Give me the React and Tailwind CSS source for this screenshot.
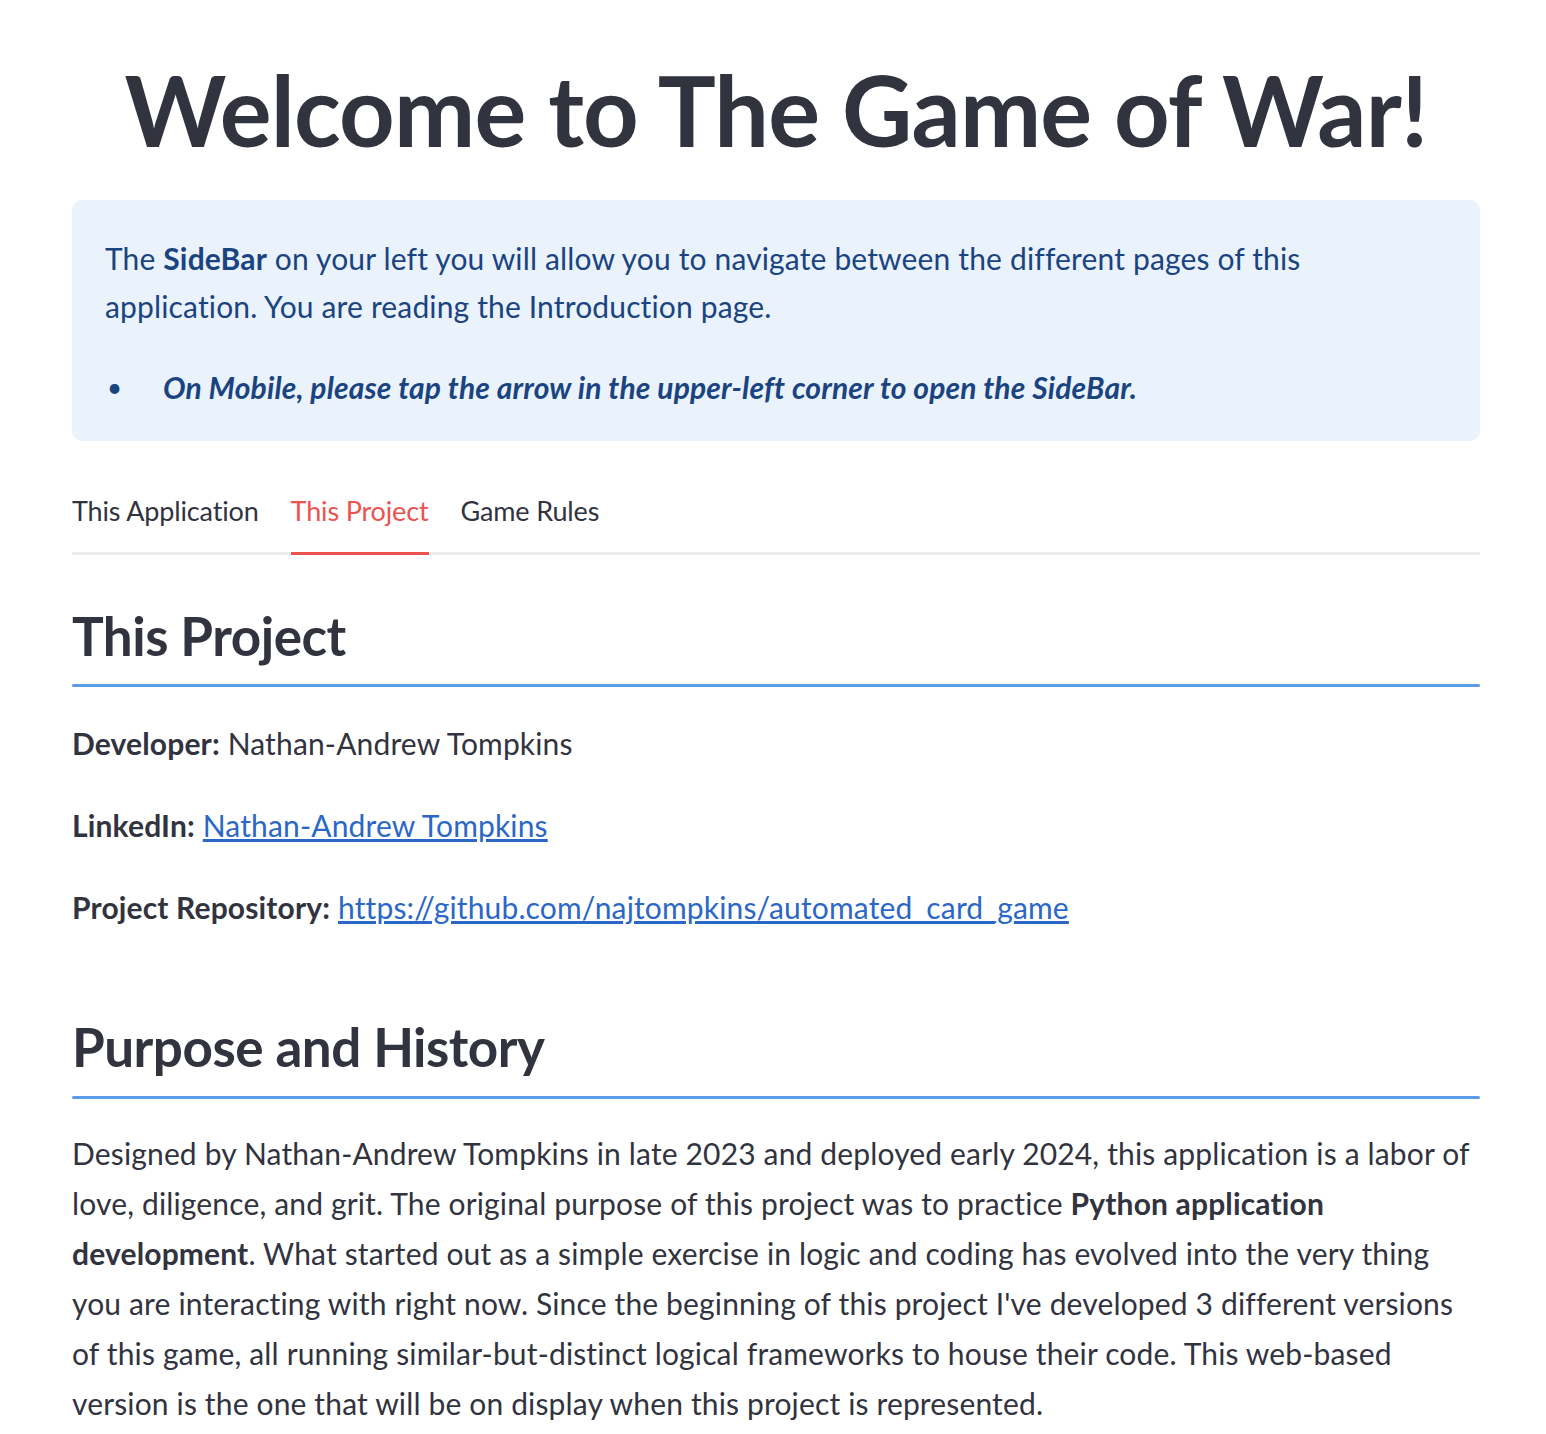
import { useState } from "react";

const tabs = ["This Application", "This Project", "Game Rules"];

function Heading({ children, top }) {
   return (
      <div className={top}>
         <h2 className="text-[53px] font-bold leading-[1.2] text-[#31333f] tracking-[-0.5px]">
            {children}
         </h2>
         <div className="mt-[17px] h-[3px] rounded-full bg-[#5b9be8]"></div>
      </div>
   );
}

function App() {
   const [active, setActive] = useState(1);

   return (
      <div
         className="h-screen overflow-hidden bg-white text-[#31333f]"
         style={{ fontFamily: "Lato, 'Noto Sans', sans-serif" }}
      >
         <div className="ml-[72px] w-[1408px]">
            <h1 className="pt-[52px] text-center text-[97px] font-bold leading-[116px] tracking-[-0.8px] text-[#31333f]">
               Welcome to The Game of War!
            </h1>

            <div className="mt-[32px] rounded-[10px] bg-[#eaf2fc] pl-[33px] pr-[60px] pt-[34px] pb-[30px] text-[30px] leading-[48px] tracking-[0.15px] text-[#1a4480]">
               <p>
                  The <strong>SideBar</strong> on your left you will allow you
                  to navigate between the different pages of this application.
                  You are reading the Introduction page.
               </p>
               <ul className="mt-[33px] pl-[2px]">
                  <li className="flex items-center">
                     <span className="w-[56px] text-[26px]">•</span>
                     <em className="font-bold">
                        On Mobile, please tap the arrow in the upper-left corner
                        to open the SideBar.
                     </em>
                  </li>
               </ul>
            </div>

            <div className="mt-[50px] flex gap-[32px] border-b-[3px] border-[#ebebeb] text-[27px] tracking-[-0.15px]">
               {tabs.map((tab, index) => (
                  <button
                     key={tab}
                     onClick={() => setActive(index)}
                     className={
                        index === active
                           ? "-mb-[3px] border-b-[3px] border-[#ec5350] pb-[20px] text-[#ec5350]"
                           : "-mb-[3px] border-b-[3px] border-transparent pb-[20px]"
                     }
                  >
                     {tab}
                  </button>
               ))}
            </div>

            <Heading top="mt-[49px]">This Project</Heading>

            <div className="mt-[31px] space-y-[32px] text-[30px] leading-[50px] tracking-[0.15px]">
               <p>
                  <strong>Developer:</strong> Nathan-Andrew Tompkins
               </p>
               <p>
                  <strong>LinkedIn:</strong>{" "}
                  <a href="#" className="text-[#2b67c6] underline">
                     Nathan-Andrew Tompkins
                  </a>
               </p>
               <p>
                  <strong>Project Repository:</strong>{" "}
                  <a href="#" className="text-[#2b67c6] underline">
                     https://github.com/najtompkins/automated_card_game
                  </a>
               </p>
            </div>

            <Heading top="mt-[83px]">Purpose and History</Heading>

            <p className="mt-[29px] text-[30px] leading-[50px] tracking-[0.15px]">
               Designed by Nathan-Andrew Tompkins in late 2023 and deployed
               early 2024, this application is a labor of love, diligence, and
               grit. The original purpose of this project was to practice{" "}
               <strong>Python application development</strong>. What started
               out as a simple exercise in logic and coding has evolved into the
               very thing you are interacting with right now. Since the
               beginning of this project I've developed 3 different versions of
               this game, all running similar-but-distinct logical frameworks
               to house their code. This web-based version is the one that will
               be on display when this project is represented.
            </p>
         </div>
      </div>
   );
}

export default App;
